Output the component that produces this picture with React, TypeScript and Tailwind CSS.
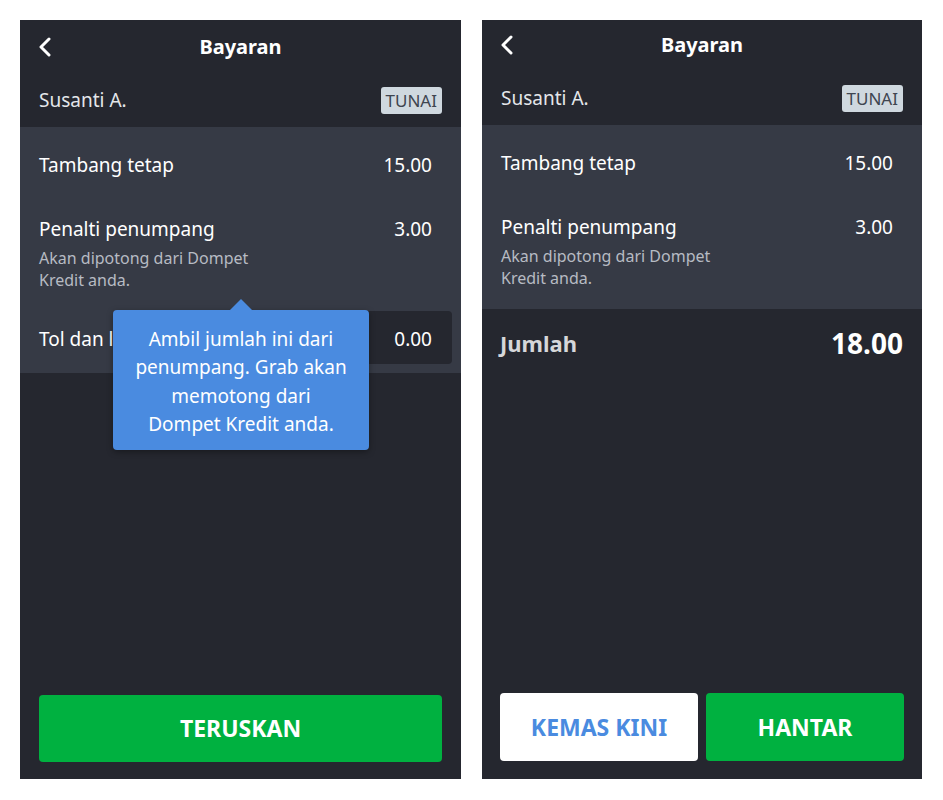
import { ReactNode } from "react";

const font = { fontFamily: '"Noto Sans", "Open Sans", sans-serif' };

function BackIcon() {
  return (
    <svg width="14" height="20" viewBox="0 0 14 20" fill="none">
      <path d="M11 2L3 10l8 8" stroke="white" strokeWidth="3" strokeLinecap="round" strokeLinejoin="round" />
    </svg>
  );
}

function Header({ top }: { top: string }) {
  return (
    <div className={top}>
      <div className="grid h-[54px] grid-cols-[1fr_auto_1fr] items-center px-[18px]">
        <BackIcon />
        <div className="text-[20px] font-bold text-white">Bayaran</div>
        <div />
      </div>
      <div className="flex h-[53px] items-center justify-between pl-[19px] pr-[19px]">
        <span className="text-[19px] text-[#e4e6ea]">Susanti A.</span>
        <span className="rounded-[3px] bg-[#cfd8df] px-[5px] text-[17px] leading-[27px] text-[#3e4550]">TUNAI</span>
      </div>
    </div>
  );
}

function FareRows({ children }: { children?: ReactNode }) {
  return (
    <>
      <div className="flex h-[28px] items-center justify-between pl-[19px] pr-[29px] text-[19px] text-white">
        <span>Tambang tetap</span>
        <span>15.00</span>
      </div>
      <div className="mt-[36px] flex h-[28px] items-center justify-between pl-[19px] pr-[29px] text-[19px] text-white">
        <span>Penalti penumpang</span>
        <span>3.00</span>
      </div>
      <div className="mt-[4px] w-[250px] pl-[19px] text-[16px] leading-[22px] text-[#b7bbc3]">
        Akan dipotong dari Dompet Kredit anda.
      </div>
      {children}
    </>
  );
}

function LeftScreen() {
  return (
    <div className="flex h-[759px] w-[441px] flex-col bg-[#25272f]">
      <Header top="" />
      <div className="relative bg-[#363a45] pt-[24px] pb-[9px]">
        <FareRows>
          <div className="mt-[20px] flex h-[53px] items-center justify-between pl-[19px] pr-[9px] text-[19px] text-white">
            <span className="pt-[4px]">Tol dan lain-lain</span>
            <div className="flex h-[53px] w-[100px] items-center justify-end rounded-[4px] bg-[#25272f] pt-[4px] pr-[20px]">0.00</div>
          </div>
        </FareRows>
        <div className="absolute left-[93px] top-[183px] w-[256px] rounded-[4px] bg-[#4a8be0] px-[10px] pt-[15px] pb-[12px] text-center text-[19px] leading-[28.3px] text-white shadow-[0_2px_6px_rgba(0,0,0,0.35)]">
          <div className="absolute -top-[11px] left-[117px] h-0 w-0 border-x-[11px] border-b-[11px] border-x-transparent border-b-[#4a8be0]" />
          <div>Ambil jumlah ini dari</div>
          <div>penumpang. Grab akan</div>
          <div>memotong dari</div>
          <div>Dompet Kredit anda.</div>
        </div>
      </div>
      <div className="flex-1" />
      <div className="px-[19px] pb-[17px]">
        <button className="flex h-[67px] w-full items-center justify-center rounded-[4px] bg-[#00b140] text-[23px] font-bold text-white">
          TERUSKAN
        </button>
      </div>
    </div>
  );
}

function RightScreen() {
  return (
    <div className="flex h-[759px] w-[440px] flex-col bg-[#25272f]">
      <Header top="-mt-[2px]" />
      <div className="bg-[#363a45] pt-[24px] pb-[20px]">
        <FareRows />
      </div>
      <div className="mt-[17px] flex h-[34px] items-center justify-between pl-[18px] pr-[19px]">
        <span className="text-[22px] font-bold text-[#d6d7da]">Jumlah</span>
        <span className="text-[28px] font-bold text-white">18.00</span>
      </div>
      <div className="flex-1" />
      <div className="flex gap-[8px] px-[18px] pb-[18px]">
        <button className="flex h-[68px] flex-1 items-center justify-center rounded-[4px] bg-white text-[23px] font-bold text-[#4a8be0]">
          KEMAS KINI
        </button>
        <button className="flex h-[68px] flex-1 items-center justify-center rounded-[4px] bg-[#00b140] text-[23px] font-bold text-white">
          HANTAR
        </button>
      </div>
    </div>
  );
}

export default function App() {
  return (
    <div className="flex h-[800px] w-[943px] gap-[21px] bg-white pt-[20px] pl-[20px]" style={font}>
      <LeftScreen />
      <RightScreen />
    </div>
  );
}
